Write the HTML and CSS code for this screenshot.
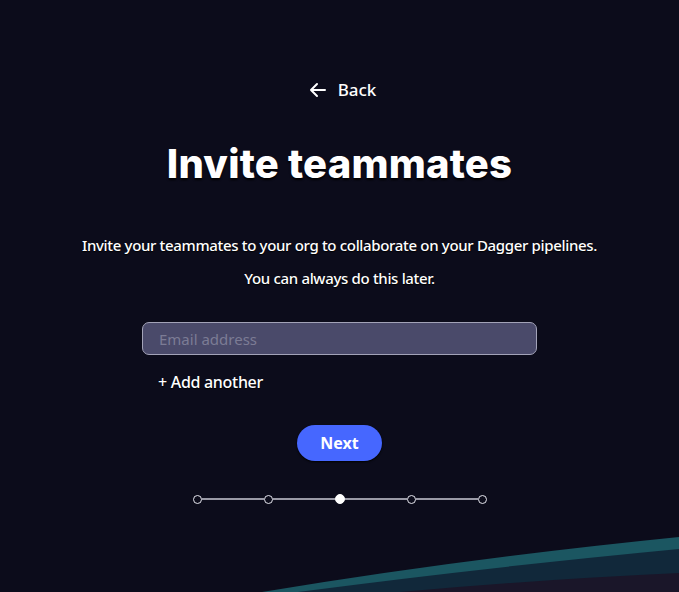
FILE: index.html
```html
<!DOCTYPE html>
<html>
<head>
<meta charset="utf-8">
<link rel="stylesheet" href="styles.css">
</head>
<body>
<svg class="waves" width="679" height="70" viewBox="0 0 679 70" preserveAspectRatio="none">
  <path d="M262 70 Q460 37 679 15 L679 70 Z" fill="#1b5661"/>
  <path d="M298 70 Q480 46 679 27 L679 70 Z" fill="#11283a"/>
  <path d="M400 70 Q530 58 679 51 L679 70 Z" fill="#1a1629"/>
</svg>
<main class="page">
  <a class="back" href="#">
    <svg width="17" height="16" viewBox="0 0 17 16"><path d="M16 8H2M8 2L2 8l6 6" fill="none" stroke="#fff" stroke-width="2" stroke-linecap="round" stroke-linejoin="round"/></svg>
    <span>Back</span>
  </a>
  <h1 class="title">Invite teammates</h1>
  <p class="lead">Invite your teammates to your org to collaborate on your Dagger pipelines.</p>
  <p class="lead second">You can always do this later.</p>
  <div class="form">
    <input class="email" type="text" placeholder="Email address">
    <button class="add">+ Add another</button>
  </div>
  <button class="next">Next</button>
  <div class="stepper">
    <span class="dot"></span>
    <span class="seg"></span>
    <span class="dot"></span>
    <span class="seg"></span>
    <span class="dot active"></span>
    <span class="seg"></span>
    <span class="dot"></span>
    <span class="seg"></span>
    <span class="dot"></span>
  </div>
</main>
</body>
</html>
```

FILE: styles.css
```css
html, body {
  margin: 0;
  padding: 0;
}
body {
  width: 679px;
  height: 592px;
  background: #0c0c1b;
  color: #fff;
  font-family: "Noto Sans", "Open Sans", sans-serif;
  position: relative;
  overflow: hidden;
}
.waves {
  position: absolute;
  left: 0;
  bottom: 0;
  display: block;
}
.page {
  display: flex;
  flex-direction: column;
  align-items: center;
  padding-top: 78px;
  position: relative;
}
.back {
  display: flex;
  align-items: center;
  gap: 12px;
  color: #fff;
  text-decoration: none;
  font-size: 17px;
  line-height: 24px;
  font-weight: 500;
  margin-left: 6px;
}
.back svg {
  display: block;
}
.title {
  margin: 38px 0 0;
  font-family: "Inter", sans-serif;
  font-weight: 800;
  font-size: 40px;
  line-height: 48px;
  letter-spacing: 0.2px;
  text-shadow: 0 2px 2px #000;
}
.lead {
  margin: 47px 0 0;
  font-size: 15px;
  line-height: 20px;
  font-weight: 500;
  letter-spacing: -0.33px;
  text-shadow: 0 1px 1px #000;
}
.lead.second {
  margin-top: 13px;
}
.form {
  width: 395px;
  margin-top: 34px;
  display: flex;
  flex-direction: column;
  align-items: flex-start;
}
.email {
  box-sizing: border-box;
  width: 395px;
  height: 33px;
  border: 1px solid #a3a3b8;
  border-radius: 7px;
  background: #4a4a6a;
  padding: 0 16px;
  font-family: "Noto Sans", sans-serif;
  font-size: 15px;
  color: #fff;
  outline: none;
}
.email::placeholder {
  color: #7c7c95;
}
.add {
  margin: 16px 0 0 16px;
  padding: 0;
  background: none;
  border: none;
  color: #fff;
  font-family: "Noto Sans", sans-serif;
  font-size: 16px;
  line-height: 22px;
  font-weight: 500;
  letter-spacing: -0.3px;
  text-shadow: 0 1px 1px #000;
  cursor: pointer;
}
.next {
  margin-top: 32px;
  width: 85px;
  height: 36px;
  border: none;
  border-radius: 18px;
  background: #4667ff;
  color: #fff;
  font-family: "Noto Sans", sans-serif;
  font-weight: 700;
  font-size: 16px;
  box-shadow: 0 1px 2px #000;
  cursor: pointer;
}
.stepper {
  margin-top: 33px;
  display: flex;
  align-items: center;
  width: 294px;
}
.dot {
  box-sizing: border-box;
  width: 9px;
  height: 9px;
  border-radius: 50%;
  border: 1.5px solid #e6e6ee;
  background: #0c0c1b;
  flex: none;
}
.dot.active {
  width: 10px;
  height: 10px;
  background: #fff;
  border-color: #fff;
}
.seg {
  flex: 1;
  height: 2px;
  background: #9a9aa6;
}
```
